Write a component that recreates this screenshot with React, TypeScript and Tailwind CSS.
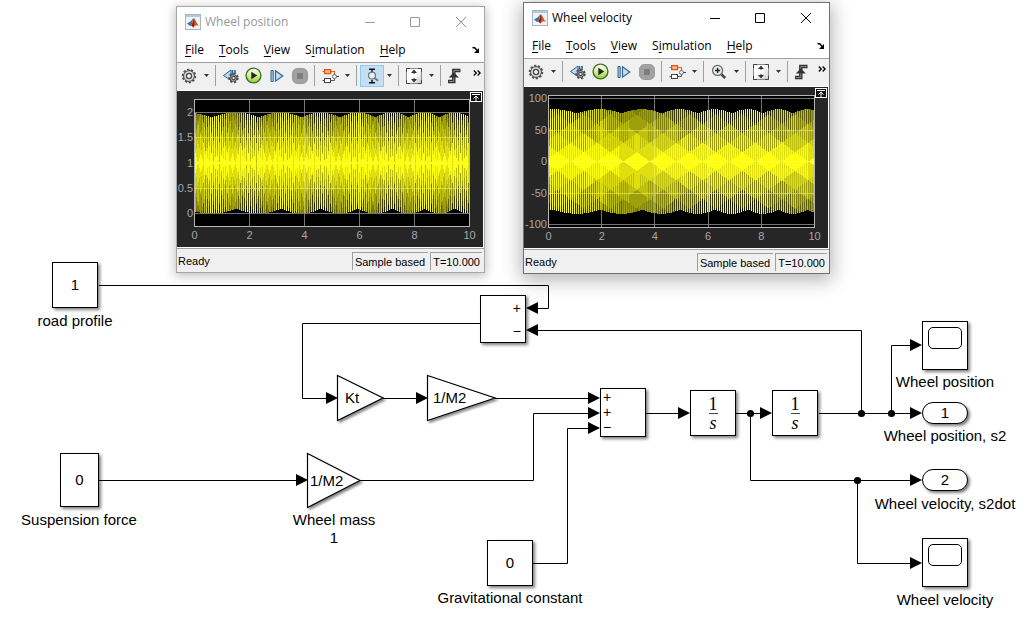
import type { ReactNode } from 'react';

/* ---------- scope traces ---------- */

const SHADES = 8;

function lobes(t: number) {
  const d = t - 0.6;
  return 0.5 + 0.54 * d + 0.022 * d * d;
}

function envelope(u: number, perCycle: number) {
  return Math.cos((2 * Math.PI * (u - Math.round(u))) / perCycle);
}

interface PlotSpec {
  title: string;
  width: number;
  height: number;
  left: number;
  right: number;
  top: number;
  bottom: number;
  zero: number;
  unit: number;
  mean: number;
  amplitude: number;
  perCycle: number;
  upperPhase: number;
  lowerPhase: number;
  beatStart: number;
  beatWidth: number;
  band: number;
  bandPeriod: number;
  bandStart: number;
  ticks: { label: string; value: number }[];
  cornerX: number;
}

const positionPlot: PlotSpec = {
  title: 'Wheel position trace',
  width: 306,
  height: 156,
  left: 17.5,
  right: 292.5,
  top: 8.5,
  bottom: 135.5,
  zero: 122.5,
  unit: 50.5,
  mean: 1,
  amplitude: 1,
  perCycle: 7,
  upperPhase: 0,
  lowerPhase: 0.5,
  beatStart: 38,
  beatWidth: 35,
  band: 0.2,
  bandPeriod: 5.3,
  bandStart: 0,
  ticks: [
    { label: '2', value: 2 },
    { label: '1.5', value: 1.5 },
    { label: '1', value: 1 },
    { label: '0.5', value: 0.5 },
    { label: '0', value: 0 },
  ],
  cornerX: 293,
};

const velocityPlot: PlotSpec = {
  title: 'Wheel velocity trace',
  width: 304,
  height: 161,
  left: 24.5,
  right: 290.5,
  top: 8.5,
  bottom: 140.5,
  zero: 74.5,
  unit: 0.63,
  mean: 0,
  amplitude: 83,
  perCycle: 7.7,
  upperPhase: -0.25,
  lowerPhase: 0.25,
  beatStart: 88,
  beatWidth: 190,
  band: 0.18,
  bandPeriod: 26.4,
  bandStart: 8,
  ticks: [
    { label: '100', value: 100 },
    { label: '50', value: 50 },
    { label: '0', value: 0 },
    { label: '-50', value: -50 },
    { label: '-100', value: -100 },
  ],
  cornerX: 291,
};

// The trace is denser than the pixel grid, so it is shaded column by column:
// solid near the mean, then ever darker bands towards the crests.
function shadedColumns(spec: PlotSpec) {
  const paths: string[] = Array.from({ length: SHADES + 1 }, () => '');
  const span = spec.right - spec.left;
  const mid = spec.zero - spec.mean * spec.unit;
  for (let i = 0; i < span; i++) {
    const t = ((i + 0.5) * 10) / span;
    const contrast = (i % 2 ? -1 : 1) * Math.sin((Math.PI * (i - spec.beatStart)) / spec.beatWidth);
    const turn = (i - spec.bandStart) / spec.bandPeriod;
    const zigzag = 1 - 4 * Math.abs(turn - Math.round(turn));
    const edge = (n: number) => spec.band * (n - 0.5 + (n % 2 ? 0.5 : -0.5) * zigzag);
    for (const side of [1, -1]) {
      const phase = side === 1 ? spec.upperPhase : spec.lowerPhase;
      const peak = envelope(lobes(t) + phase, spec.perCycle);
      let from = 0;
      for (let n = 1; from < peak; n++) {
        const to = Math.min(peak, Math.max(from, edge(n)));
        const depth = Math.min(1, (n - 1) * spec.band);
        const light = 1 - 0.5 * depth + 0.5 * depth * contrast;
        const shade = Math.max(0, Math.min(SHADES, Math.round(light * SHADES)));
        const scale = spec.amplitude * spec.unit * side;
        const y1 = Math.round(mid - from * scale);
        const y2 = Math.round(mid - to * scale);
        if (y1 !== y2) paths[shade] += `M${spec.left + i + 0.5} ${y1}V${y2}h1V${y1}z`;
        from = to;
      }
    }
  }
  return paths;
}

function Plot({ spec }: { spec: PlotSpec }) {
  const { left, right, top, bottom } = spec;
  const px = (t: number) => left + ((right - left) * t) / 10;
  const py = (v: number) => spec.zero - v * spec.unit;
  const xs = [0, 2, 4, 6, 8, 10];
  const snap = (n: number) => Math.floor(n) + 0.5;
  const grid = [
    ...xs.slice(1, 5).map((x) => `M${snap(px(x))} ${top}V${bottom}`),
    ...spec.ticks.map((k) => `M${left} ${snap(py(k.value))}H${right}`),
  ].join('');
  return (
    <svg
      role="img"
      aria-label={spec.title}
      viewBox={`0 0 ${spec.width} ${spec.height}`}
      className="block h-auto w-full bg-[#262626]"
    >
      <rect x={left} y={top} width={right - left} height={bottom - top} fill="#000" />
      <path d={grid} stroke="#5a5a5a" fill="none" />
      {shadedColumns(spec).map((d, i) => (
        <path key={i} d={d} fill="#ffff11" fillOpacity={i / SHADES} />
      ))}
      <path d={grid} stroke="#ffffff" strokeOpacity="0.16" fill="none" />
      <rect x={left} y={top} width={right - left} height={bottom - top} fill="none" stroke="#b4b4b4" />
      <g fill="#a8a8a8" fontSize="11" fontFamily="Liberation Sans, Arial, sans-serif">
        {spec.ticks.map((k) => (
          <text key={k.label} x={left - 1.5} y={py(k.value) + 3.5} textAnchor="end">
            {k.label}
          </text>
        ))}
        {xs.map((x) => (
          <text key={x} x={px(x)} y={bottom + 12.5} textAnchor="middle">
            {x}
          </text>
        ))}
      </g>
      <g transform={`translate(${spec.cornerX} 1)`}>
        <rect x="0.5" y="0.5" width="11" height="9" fill="#111" stroke="#fff" />
        <path d="M2 2.5H10M6 9V4M3.5 6.5L6 4L8.5 6.5" stroke="#fff" fill="none" />
      </g>
    </svg>
  );
}

/* ---------- toolbar icons ---------- */

function GearShape({ r = 6 }: { r?: number }) {
  return (
    <>
      <circle r={r - 0.4} fill="none" stroke="#4a4a4a" strokeWidth="2" strokeDasharray="2.2 1.6" />
      <circle r={r - 1.2} fill="#d8d8d8" stroke="#4a4a4a" />
      <circle r={r / 2.6} fill="#f4f4f4" stroke="#4a4a4a" strokeWidth="1.3" />
    </>
  );
}

const GearIcon = () => (
  <svg width="16" height="16" viewBox="-8 -8 16 16"><GearShape r={6.6} /></svg>
);

const StepBackIcon = () => (
  <svg width="18" height="16" viewBox="0 0 18 16">
    <path d="M9 2L1.5 7.5L9 12.5Z" fill="#b9d9f2" stroke="#35658c" />
    <path d="M10.5 2V8M13 2V6" stroke="#35658c" strokeWidth="1.6" />
    <g transform="translate(11.5 10)"><GearShape r={4.6} /></g>
  </svg>
);

const RunIcon = () => (
  <svg width="17" height="17" viewBox="0 0 17 17">
    <defs>
      <linearGradient id="run" x1="0" y1="0" x2="0" y2="1">
        <stop offset="0" stopColor="#ffffff" />
        <stop offset="0.5" stopColor="#d5f09a" />
        <stop offset="1" stopColor="#8fcf2e" />
      </linearGradient>
    </defs>
    <circle cx="8.5" cy="8.5" r="7.4" fill="url(#run)" stroke="#41702a" strokeWidth="1.4" />
    <path d="M6.3 4.7V12.3L12.3 8.5Z" fill="#222" />
  </svg>
);

const StepIcon = () => (
  <svg width="14" height="14" viewBox="0 0 14 14">
    <path d="M1 1.5H3.2V12.5H1Z" fill="#a9cdea" stroke="#35658c" />
    <path d="M5.5 1.8L12.8 7L5.5 12.2Z" fill="#c4def2" stroke="#35658c" strokeWidth="1.2" />
  </svg>
);

const StopIcon = () => (
  <svg width="16" height="16" viewBox="0 0 16 16">
    <rect x="0.5" y="0.5" width="15" height="15" rx="5" fill="#a2a2a2" stroke="#989898" />
    <rect x="5" y="5" width="6" height="6" fill="#7d7d7d" />
  </svg>
);

const BlocksIcon = () => (
  <svg width="17" height="16" viewBox="0 0 17 16" fill="none">
    <path d="M0.5 3.5H2M9 3.5H12.5V6.5" stroke="#e0641c" strokeWidth="1.2" />
    <rect x="2.6" y="1.6" width="6" height="4" fill="#ffb27a" stroke="#d9541a" strokeWidth="1.2" />
    <path d="M0.5 12.5H2M9 12.5H12.5V11" stroke="#555" />
    <rect x="2.5" y="10.5" width="6" height="4" fill="#fff" stroke="#444" />
    <circle cx="12.5" cy="8.5" r="2" fill="#fff" stroke="#666" />
    <path d="M14.5 8.5H17" stroke="#444" />
  </svg>
);

const ZoomYIcon = () => (
  <svg width="16" height="16" viewBox="0 0 16 16" fill="none">
    <path d="M5 1.2H11M5 14.8H11M8 1V4M8 12V15" stroke="#111" strokeWidth="1.5" />
    <circle cx="8" cy="7.6" r="3.5" fill="#e4eff8" stroke="#707880" strokeWidth="1.2" />
    <path d="M10.5 10L14 12.8" stroke="#777" strokeWidth="2" />
  </svg>
);

const ZoomInIcon = () => (
  <svg width="16" height="16" viewBox="0 0 16 16" fill="none">
    <circle cx="6.6" cy="6.4" r="5" fill="#eaf2f8" stroke="#666" strokeWidth="1.3" />
    <path d="M4 6.4H9.2M6.6 3.8V9" stroke="#222" strokeWidth="1.5" />
    <path d="M10.5 10.3L14.2 14" stroke="#444" strokeWidth="2.6" />
  </svg>
);

const ScaleIcon = () => (
  <svg width="16" height="16" viewBox="0 0 16 16">
    <defs>
      <linearGradient id="scale" x1="0" y1="0" x2="1" y2="1">
        <stop offset="0.45" stopColor="#fff" />
        <stop offset="1" stopColor="#c8c8c8" />
      </linearGradient>
    </defs>
    <path d="M0.5 0.5H15.5V15.5H0.5Z" fill="url(#scale)" stroke="#8a8a8a" />
    <path d="M0.5 4V0.5H4M12 0.5H15.5V4M15.5 12V15.5H12M4 15.5H0.5V12" fill="none" stroke="#444" />
    <path d="M8 1.6L11 5H5ZM8 14.4L11 11H5Z" fill="#333" />
    <path d="M8 4V6M8 10V12" stroke="#333" />
  </svg>
);

const TriggerIcon = () => (
  <svg width="15" height="16" viewBox="0 0 15 16">
    <path d="M1 13.5H6.8V2.5H13.5" fill="none" stroke="#333" strokeWidth="3.4" />
    <path d="M2 13.5H6.8V2.5H12.5" fill="none" stroke="#888" strokeWidth="1" />
    <path d="M6.8 4.2L11.8 9.6H1.8Z" fill="#333" />
  </svg>
);

const MatlabIcon = () => (
  <svg width="16" height="16" viewBox="0 0 16 16">
    <rect x="0.5" y="0.5" width="15" height="15" fill="#f0f2f4" stroke="#a9b4bf" />
    <path d="M1 1H15V3H1Z" fill="#a8cbe6" />
    <path d="M2 9.4L5.6 7.6L8.2 4.4L7.2 10L5 12Z" fill="#2f78b5" />
    <path d="M5 11.8L6.8 10L8.8 4C10.6 5.6 11.6 9.6 14 11.8C12 10.6 10.4 11 8.4 13.4C7.6 12 6.6 11.4 5 11.8Z" fill="#d8571c" />
    <path d="M8.8 4C8.2 7.4 7.8 9.4 6.4 11.4L8.4 13.4C9.6 11 9.4 7 8.8 4Z" fill="#8f2018" />
  </svg>
);

function Caret({ label, className }: { label: string; className: string }) {
  return (
    <button type="button" aria-label={label} className={`flex h-5 items-center ${className}`}>
      <svg width="5" height="3" viewBox="0 0 5 3"><path d="M0 0H5L2.5 3Z" fill="#333" /></svg>
    </button>
  );
}

function Tool({ label, className, children }: { label: string; className: string; children: ReactNode }) {
  return (
    <button type="button" aria-label={label} className={`flex items-center justify-center ${className}`}>
      {children}
    </button>
  );
}

const Separator = () => <span className="mx-[3px] h-[21px] w-px shrink-0 bg-[#a0a0a0]" />;

/* ---------- scope window ---------- */

const MENU = ['File', 'Tools', 'View', 'Simulation', 'Help'];

function MenuLabel({ name }: { name: string }) {
  const at = name === 'Simulation' ? 1 : 0;
  return (
    <>
      {name.slice(0, at)}
      <span className="underline underline-offset-2">{name[at]}</span>
      {name.slice(at + 1)}
    </>
  );
}

function ScopeWindow({
  title,
  active,
  className,
  spec,
}: {
  title: string;
  active: boolean;
  className: string;
  spec: PlotSpec;
}) {
  const frame = active
    ? 'border-[#707070] shadow-[0_4px_18px_2px_rgba(0,0,0,0.3)]'
    : 'border-[#a6a6a6] shadow-[0_2px_10px_1px_rgba(0,0,0,0.25)]';
  return (
    <section
      aria-label={title}
      className={`absolute z-10 flex flex-col border bg-white font-['Open_Sans','Noto_Sans',sans-serif] text-[12px] leading-4 text-black ${frame} ${className}`}
    >
      <header className={`flex h-[30px] items-center pl-2 ${active ? 'text-black' : 'text-[#999999]'}`}>
        <MatlabIcon />
        <h2 className="ml-1 grow">{title}</h2>
        <button type="button" aria-label="Minimize" className="flex h-full w-[45px] items-center justify-center">
          <svg width="10" height="10" viewBox="0 0 10 10"><path d="M0 5.5H10" stroke="currentColor" /></svg>
        </button>
        <button type="button" aria-label="Maximize" className="flex h-full w-[46px] items-center justify-center">
          <svg width="10" height="10" viewBox="0 0 10 10"><path d="M0.5 0.5H9.5V9.5H0.5Z" stroke="currentColor" fill="none" /></svg>
        </button>
        <button type="button" aria-label="Close" className="flex h-full w-[46px] items-center justify-center">
          <svg width="10" height="10" viewBox="0 0 10 10"><path d="M0 0L10 10M10 0L0 10" stroke="currentColor" /></svg>
        </button>
      </header>

      <nav aria-label="Menu" className="flex h-[25px] items-center gap-[15px] pr-1 pl-2">
        {MENU.map((name) => (
          <button key={name} type="button"><MenuLabel name={name} /></button>
        ))}
        <button type="button" aria-label="Dock" className="ml-auto">
          <svg width="8" height="8" viewBox="0 0 8 8">
            <path d="M0.5 1.5L3 2L5.5 5" fill="none" stroke="#000" strokeWidth="1.4" />
            <path d="M7 2V7H2Z" fill="#000" />
          </svg>
        </button>
      </nav>

      <div role="toolbar" aria-label="Scope tools" className="flex h-[29px] items-center border-t border-b border-t-[#a0a0a0] border-b-white bg-[#f0f0f0] pr-[3px] pb-0.5 pl-1">
        <Tool label="Configuration" className="w-4"><GearIcon /></Tool>
        <Caret label="Configuration menu" className="w-[15px] pl-[7px]" />
        <Separator />
        <Tool label="Stepping options" className="w-[23px]"><StepBackIcon /></Tool>
        <Tool label="Run" className="w-[23px]"><RunIcon /></Tool>
        <Tool label="Step forward" className="w-[23px]"><StepIcon /></Tool>
        <Tool label="Stop" className="w-[23px]"><StopIcon /></Tool>
        <Separator />
        <Tool label="Highlight block" className="w-6"><BlocksIcon /></Tool>
        <Caret label="Highlight menu" className="w-[11px] justify-center" />
        <Separator />
        {active ? (
          <Tool label="Zoom" className="w-6"><ZoomInIcon /></Tool>
        ) : (
          <Tool label="Zoom Y" className="h-[22px] w-6 border border-[#90c8f6] bg-[#c4def2]"><ZoomYIcon /></Tool>
        )}
        <Caret label="Zoom menu" className="w-[11px] justify-center" />
        <Separator />
        <Tool label="Scale axes" className="w-6"><ScaleIcon /></Tool>
        <Caret label="Scale menu" className="w-[11px] justify-center" />
        <Separator />
        <Tool label="Triggers" className="w-5"><TriggerIcon /></Tool>
        <button type="button" aria-label="More tools" className="mb-1.5 ml-auto">
          <svg width="8" height="6" viewBox="0 0 8 6">
            <path d="M0.8 0.5L3.3 3L0.8 5.5M4.6 0.5L7.1 3L4.6 5.5" fill="none" stroke="#000" strokeWidth="1.3" />
          </svg>
        </button>
      </div>

      <div className="pr-px"><Plot spec={spec} /></div>

      <footer className="mt-px flex h-6 items-stretch border-t border-[#a0a0a0] bg-[#f0f0f0] pt-[3px] pr-0.5 pb-0.5 font-['Liberation_Sans',Arial,sans-serif] text-[11px]">
        <span className="grow self-center pl-px">Ready</span>
        <span className="flex items-center border-t border-l border-[#a0a0a0] pr-[3px] pl-0.5">Sample based</span>
        <span className="ml-0.5 flex items-center border-t border-l border-[#a0a0a0] px-0.5">T=10.000</span>
      </footer>
    </section>
  );
}

/* ---------- block diagram ---------- */

const WIRES = [
  'M99 285.5H548.5V308.5H538',
  'M480 323.5H302.5V398.5H327',
  'M383 398.5H417',
  'M495 398.5H590',
  'M99 480.5H297',
  'M360 480.5H533.5V413.5H590',
  'M533 563.5H567.5V428.5H590',
  'M646 413.5H680',
  'M736 413.5H762',
  'M750.5 413.5V480.5H912',
  'M857.5 480.5V563.5H912',
  'M819 413.5H912',
  'M861.5 413.5V330.5H538',
  'M891.5 413.5V345.5H912',
].join('');

const RIGHT_ARROWS = [
  [338, 398], [428, 398], [600, 398], [600, 413], [600, 428], [308, 480], [690, 413],
  [772, 413], [922, 413], [922, 345], [922, 480], [922, 563],
];
const LEFT_ARROWS = [[526, 308], [526, 330]];
const JUNCTIONS = [[750.5, 413.5], [861.5, 413.5], [891.5, 413.5], [857.5, 480.5]];

function Wires() {
  return (
    <svg aria-hidden="true" width="1030" height="640" viewBox="0 0 1030 640" className="absolute top-0 left-0">
      <path d={WIRES} fill="none" stroke="#000" />
      {RIGHT_ARROWS.map(([x, y]) => (
        <path key={`${x}-${y}`} d={`M${x} ${y}l-12 -6v12z`} />
      ))}
      {LEFT_ARROWS.map(([x, y]) => (
        <path key={`${x}-${y}`} d={`M${x} ${y}l12 -6v12z`} />
      ))}
      {JUNCTIONS.map(([x, y]) => (
        <circle key={`${x}-${y}`} cx={x} cy={y} r="3.6" />
      ))}
    </svg>
  );
}

function Block({ className, children }: { className: string; children?: ReactNode }) {
  return (
    <div className={`absolute flex border border-black bg-white shadow-[2px_2px_3px_rgba(0,0,0,0.5)] ${className}`}>
      {children}
    </div>
  );
}

function Label({ className, children }: { className: string; children: ReactNode }) {
  return <p className={`absolute -translate-x-1/2 text-center whitespace-nowrap ${className}`}>{children}</p>;
}

function Gain({ w, h, className, children }: { w: number; h: number; className: string; children: ReactNode }) {
  return (
    <div className={`absolute flex items-center ${className}`}>
      <svg
        aria-hidden="true"
        width={w + 2}
        height={h + 2}
        viewBox={`0 0 ${w + 2} ${h + 2}`}
        className="absolute top-0 left-0 overflow-visible drop-shadow-[2px_2px_1px_rgba(0,0,0,0.45)]"
      >
        <path d={`M0.5 0.5L${w} ${h / 2}L0.5 ${h - 0.5}Z`} fill="#fff" stroke="#000" strokeWidth="1.2" />
      </svg>
      <span className="relative">{children}</span>
    </div>
  );
}

function Integrator({ className }: { className: string }) {
  return (
    <Block className={`h-[46px] w-[46px] flex-col items-center justify-center font-['Liberation_Serif',serif] text-[18px] leading-[18px] ${className}`}>
      <span className="border-b border-[#444]">1</span>
      <span className="italic">s</span>
    </Block>
  );
}

function ScopeBlock({ className }: { className: string }) {
  return (
    <Block className={`h-[49px] w-[46px] items-start justify-center pt-[5px] ${className}`}>
      <span className="h-[22px] w-[34px] rounded-[5px] border border-black" />
    </Block>
  );
}

export default function App() {
  return (
    <main className="relative min-h-screen overflow-hidden bg-white font-['Liberation_Sans',Arial,sans-serif] text-[15px] leading-[18px] text-black">
      <Wires />

      <Block className="top-[262px] left-[52px] h-[46px] w-[46px] items-center justify-center">1</Block>
      <Label className="top-[312px] left-[75px]">road profile</Label>

      <Block className="top-[453px] left-[60px] h-[54px] w-[39px] items-center justify-center">0</Block>
      <Label className="top-[511px] left-[79px]">Suspension force</Label>

      <Block className="top-[295px] left-[480px] h-[48px] w-[46px] flex-col items-end gap-[5px] pt-[3px] pr-1 text-[14px]">
        <span>+</span>
        <span>−</span>
      </Block>

      <Gain w={46} h={46} className="top-[375px] left-[337px] h-[46px] w-12 pl-2">Kt</Gain>
      <Gain w={68} h={46} className="top-[375px] left-[427px] h-[46px] w-[70px] pl-1.5">1/M2</Gain>
      <Gain w={53} h={55} className="top-[453px] left-[307px] h-[55px] w-[55px] pl-[3px]">1/M2</Gain>
      <Label className="top-[511px] left-[334px]">
        Wheel mass
        <br />1
      </Label>

      <Block className="top-[388px] left-[600px] h-[49px] w-[46px] flex-col pt-px pl-0.5 text-[14px] leading-[15px]">
        <span>+</span>
        <span>+</span>
        <span>−</span>
      </Block>

      <Block className="top-[540px] left-[487px] h-[46px] w-[46px] items-center justify-center">0</Block>
      <Label className="top-[589px] left-[510px]">Gravitational constant</Label>

      <Integrator className="top-[390px] left-[690px]" />
      <Integrator className="top-[390px] left-[772px]" />

      <ScopeBlock className="top-[321px] left-[922px]" />
      <Label className="top-[373px] left-[945px]">Wheel position</Label>

      <Block className="top-[402px] left-[922px] h-[22px] w-[46px] items-center justify-center rounded-full">1</Block>
      <Label className="top-[427px] left-[945px]">Wheel position, s2</Label>

      <Block className="top-[469px] left-[922px] h-[22px] w-[46px] items-center justify-center rounded-full">2</Block>
      <Label className="top-[495px] left-[945px]">Wheel velocity, s2dot</Label>

      <ScopeBlock className="top-[538px] left-[922px]" />
      <Label className="top-[591px] left-[945px]">Wheel velocity</Label>

      <ScopeWindow title="Wheel position" active={false} spec={positionPlot} className="top-[6px] left-[176px] w-[309px]" />
      <ScopeWindow title="Wheel velocity" active spec={velocityPlot} className="top-[2px] left-[523px] w-[307px]" />
    </main>
  );
}
